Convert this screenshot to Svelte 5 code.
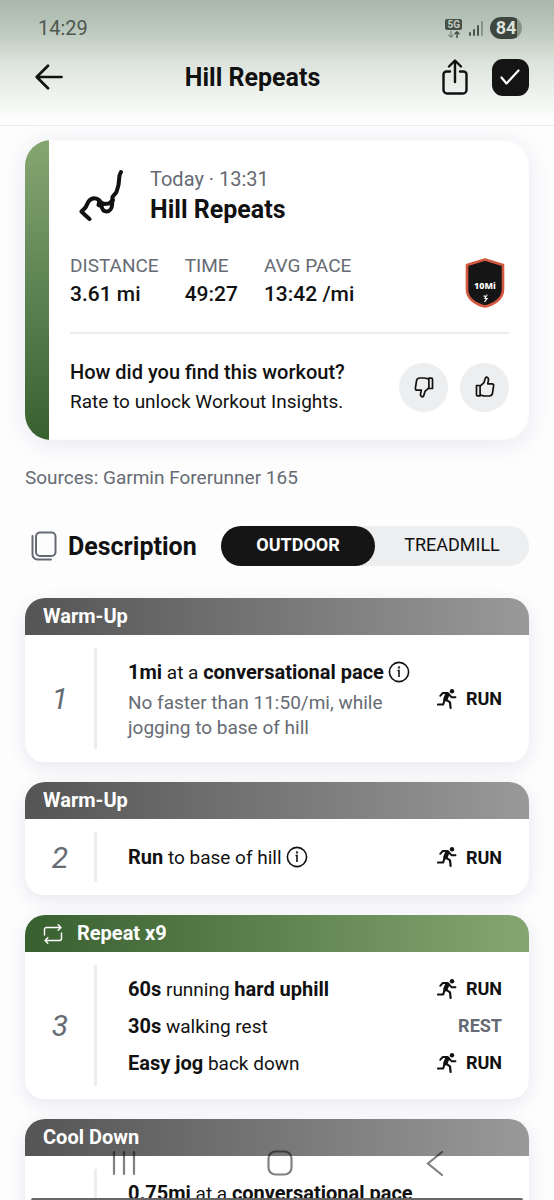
<script>
  let surface = $state("outdoor");

  const surfaces = [
    { id: "outdoor", label: "OUTDOOR" },
    { id: "treadmill", label: "TREADMILL" }
  ];

  const stats = [
    { label: "DISTANCE", value: "3.61 mi" },
    { label: "TIME", value: "49:27" },
    { label: "AVG PACE", value: "13:42 /mi" }
  ];

  const steps = [
    {
      title: "Warm-Up",
      rows: [
        {
          parts: [["1mi", true], [" at a "], ["conversational pace", true]],
          info: true,
          note: "No faster than 11:50/mi, while jogging to base of hill",
          kind: "RUN"
        }
      ]
    },
    {
      title: "Warm-Up",
      rows: [{ parts: [["Run", true], [" to base of hill"]], info: true, kind: "RUN" }]
    },
    {
      title: "Repeat x9",
      repeat: true,
      rows: [
        { parts: [["60s", true], [" running "], ["hard uphill", true]], kind: "RUN" },
        { parts: [["30s", true], [" walking rest"]], kind: "REST" },
        { parts: [["Easy jog", true], [" back down"]], kind: "RUN" }
      ]
    },
    {
      title: "Cool Down",
      rows: [
        {
          parts: [["0.75mi", true], [" at a "], ["conversational pace", true]],
          note: "No faster than 11:50/mi, while jogging back home",
          kind: "RUN"
        }
      ]
    }
  ];
</script>

{#snippet thumb()}
  <path d="M1.5 9.5h3.6v10.3H2.6a1.1 1.1 0 0 1-1.1-1.1z" />
  <path d="M5.1 10.2 9 6.600 10.400 2c.2-.8 1-1 1.700-.7 1.300.6 1.600 2 1.300 3.300L12.700 7.800H17c1.100 0 1.800.9 1.600 2l-1.100 7.400c-.3 1.900-1.500 2.800-3.300 2.800H9.500c-1.700 0-2.700-.9-4.400-1.100" />
{/snippet}

<div class="screen">
  <header class="top">
    <div class="status">
      <time>14:29</time>
      <div class="status-icons">
        <span class="network">
          <b>5G</b>
          <svg width="12" height="7" viewBox="0 0 12 7" fill="none" stroke-width="1.4">
            <path d="M3 0v6M.5 3.700 3 6.200l2.500-2.500" stroke="#7f8a80" />
            <path d="M9 7V1M6.500 3.300 9 .8l2.500 2.500" stroke="#3f4a41" />
          </svg>
        </span>
        <svg width="14" height="15" viewBox="0 0 14 15" fill="#4a544b">
          <rect x="0" y="11" width="2" height="4" rx="1" />
          <rect x="4" y="8" width="2" height="7" rx="1" />
          <rect x="8" y="4" width="2" height="11" rx="1" />
          <rect x="12" y="0" width="2" height="15" rx="1" opacity=".45" />
        </svg>
        <span class="battery">84</span>
      </div>
    </div>
    <div class="toolbar">
      <button class="icon-button" type="button" aria-label="Back">
        <svg width="28" height="26" viewBox="0 0 28 26" fill="none" stroke="#111" stroke-width="2.700" stroke-linecap="round" stroke-linejoin="round">
          <path d="M26.500 13H2M13 1.800 1.700 13 13 24.200" />
        </svg>
      </button>
      <h1>Hill Repeats</h1>
      <div class="actions">
        <button class="icon-button" type="button" aria-label="Share">
          <svg width="26" height="36" viewBox="0 0 26 36" fill="none" stroke="#111" stroke-width="2.400" stroke-linecap="round" stroke-linejoin="round">
            <path d="M13 23V1.800M7 7.500l6-6 6 6" />
            <path d="M8 12.500H4.500a3 3 0 0 0-3 3V31a3.500 3.500 0 0 0 3.500 3.500h16a3.500 3.500 0 0 0 3.500-3.500V15.500a3 3 0 0 0-3-3H18" />
          </svg>
        </button>
        <button class="icon-button done" type="button" aria-label="Completed">
          <svg width="20" height="16" viewBox="0 0 20 16" fill="none" stroke="#fff" stroke-width="2.200" stroke-linecap="round" stroke-linejoin="round">
            <path d="M1.500 8.500 6.500 14.500 18.500 1.500" />
          </svg>
        </button>
      </div>
    </div>
  </header>

  <main>
    <section class="summary">
      <div class="summary-body">
        <div class="summary-head">
          <svg width="46" height="52" viewBox="0 0 46 52" fill="none" stroke="#111" stroke-width="4" stroke-linecap="round" stroke-linejoin="round">
            <path d="M43 3 41.500 6.500 40.500 16 38.500 23 34.500 28 34.200 35C34 39.500 31.500 42.500 28.500 42.500 25.500 42.500 24 40 23.500 37L20.500 36 21.500 31.500C18.500 28.500 14 28 10.500 32.500L7.500 38.500 3.500 42.500 7 46 11.500 50" />
            <path d="M21.500 32.500 26 35 31 34.500 35 31" />
          </svg>
          <div>
            <p class="muted">Today · 13:31</p>
            <h2>Hill Repeats</h2>
          </div>
        </div>

        <div class="stats">
          <dl>
            {#each stats as stat (stat.label)}
              <div>
                <dt>{stat.label}</dt>
                <dd>{stat.value}</dd>
              </div>
            {/each}
          </dl>
          <svg class="badge" width="40" height="50" viewBox="0 0 40 50">
            <path d="M20 1.500 38 7v24.500C38 40 30.500 46 20 48.500 9.500 46 2 40 2 31.500V7z" fill="#151515" stroke="#d2583f" stroke-width="2.600" stroke-linejoin="round" />
            <text x="20" y="31" text-anchor="middle">10Mi</text>
            <path d="M18.500 38.200h2.700l-1.200 2.300h2l-2.500 3.500M21.800 37.200l.6-.4" fill="none" stroke="#fff" stroke-width="1.200" />
          </svg>
        </div>

        <div class="feedback">
          <div>
            <p class="question">How did you find this workout?</p>
            <p>Rate to unlock Workout Insights.</p>
          </div>
          <div class="votes">
            <button type="button" aria-label="Thumbs down">
              <svg class="down" width="20" height="22" viewBox="0 0 20 22">{@render thumb()}</svg>
            </button>
            <button type="button" aria-label="Thumbs up">
              <svg width="20" height="22" viewBox="0 0 20 22">{@render thumb()}</svg>
            </button>
          </div>
        </div>
      </div>
    </section>

    <p class="sources">Sources: Garmin Forerunner 165</p>

    <div class="description">
      <svg width="26" height="30" viewBox="0 0 26 30" fill="none" stroke="#656a72" stroke-width="2" stroke-linecap="round">
        <rect x="5" y="1.500" width="19.500" height="23.500" rx="4" />
        <path d="M1.500 5v18.500a5 5 0 0 0 5 5H20" />
      </svg>
      <h2>Description</h2>
      <div class="segments">
        {#each surfaces as item (item.id)}
          <button
            class="segment"
            class:selected={surface === item.id}
            type="button"
            aria-pressed={surface === item.id}
            onclick={() => (surface = item.id)}
          >
            {item.label}
          </button>
        {/each}
      </div>
    </div>

    <ol class="steps">
      {#each steps as step, i}
        <li>
          <h3 class:repeat={step.repeat}>
            {#if step.repeat}
              <svg width="20" height="20" viewBox="0 0 20 20" fill="none" stroke="#fff" stroke-width="1.400" stroke-linecap="round" stroke-linejoin="round">
                <path d="M1.500 11V5.500a2 2 0 0 1 2-2H18M15.200.8 18 3.500l-2.800 2.700" />
                <path d="M18.500 9v5.500a2 2 0 0 1-2 2H2M4.800 13.800 2 16.500l2.800 2.700" />
              </svg>
            {/if}
            {step.title}
          </h3>
          <div class="step-body">
            <span class="number">{i + 1}</span>
            <div class="rows">
              {#each step.rows as row}
                <div class="row">
                  <div class="text">
                    <div class="line">
                      <p>{#each row.parts as [text, strong]}{#if strong}<strong>{text}</strong>{:else}{text}{/if}{/each}</p>
                      {#if row.info}
                        <button class="info" type="button" aria-label="More info">
                          <svg width="22" height="22" viewBox="0 0 22 22" fill="none" stroke="#111" stroke-width="1.600">
                            <circle cx="11" cy="11" r="9.600" />
                            <path d="M9.500 9.500H11V16" />
                            <circle cx="11" cy="6.400" r=".4" />
                          </svg>
                        </button>
                      {/if}
                    </div>
                    {#if row.note}
                      <p class="note">{row.note}</p>
                    {/if}
                  </div>
                  <span class="kind" class:rest={row.kind === "REST"}>
                    {#if row.kind === "RUN"}
                      <svg width="20" height="20" viewBox="0 0 20 20" fill="none" stroke="#111" stroke-linecap="round" stroke-linejoin="round">
                        <circle cx="15" cy="2.300" r="2.200" fill="#111" stroke="none" />
                        <path d="M3.200 6.800 5.800 4H10" stroke-width="1.900" />
                        <path d="M10.500 5.200 8.400 10.200" stroke-width="4.400" />
                        <path d="M12 5.500 14.500 8.200H18.500" stroke-width="1.900" />
                        <path d="M9 10.700 13 13.300 13.600 19" stroke-width="2.200" />
                        <path d="M7.500 11 6.200 15.500H1" stroke-width="2.100" />
                      </svg>
                    {/if}
                    {row.kind}
                  </span>
                </div>
              {/each}
            </div>
          </div>
        </li>
      {/each}
    </ol>
  </main>

  <nav class="system-nav" aria-label="System">
    <button type="button" aria-label="Recent apps">
      <svg width="26" height="26" viewBox="0 0 26 26" fill="none" stroke="#808080" stroke-width="2.200" stroke-linecap="round">
        <path d="M3 2v22M13 2v22M23 2v22" />
      </svg>
    </button>
    <button type="button" aria-label="Home">
      <svg width="26" height="26" viewBox="0 0 26 26" fill="none" stroke="#808080" stroke-width="2.200">
        <rect x="1.500" y="1.500" width="23" height="23" rx="7" />
      </svg>
    </button>
    <button type="button" aria-label="Back">
      <svg width="26" height="26" viewBox="0 0 26 26" fill="none" stroke="#808080" stroke-width="2.200" stroke-linecap="round">
        <path d="M20 2 6 13.500 20 25" />
      </svg>
    </button>
  </nav>
  <div class="sheet-edge"></div>
</div>

<style>
  :global(body) {
    margin: 0;
    background: #fdfdfe;
  }

  .screen {
    height: 100vh;
    display: flex;
    flex-direction: column;
    overflow: hidden;
    color: #111;
    font-family: Roboto, "Liberation Sans", sans-serif;
    font-size: 19px;
  }

  h1,
  h2,
  h3,
  p,
  dl,
  dd,
  ol {
    margin: 0;
    padding: 0;
  }

  h1,
  h2 {
    font-size: 25px;
    font-weight: 700;
  }

  button {
    border: 0;
    padding: 0;
    background: none;
    color: inherit;
    font: inherit;
    cursor: pointer;
  }

  svg {
    display: block;
    flex-shrink: 0;
  }

  .top {
    flex-shrink: 0;
    padding: 0 25px 27px;
    border-bottom: 1px solid #e9eaeb;
    background: linear-gradient(#a8b7aa, #c0cbc1 28%, #dce3dc 50%, #f2f5f2 80%, #fff);
  }

  .status {
    height: 56px;
    display: flex;
    align-items: center;
    justify-content: space-between;
    padding: 0 7px 0 13px;
    color: #4d584f;
    font-size: 20px;
  }

  .status-icons {
    display: flex;
    align-items: center;
    gap: 7px;
  }

  .network {
    display: flex;
    flex-direction: column;
    align-items: center;
    gap: 1px;
  }

  .network b {
    padding: 0 2px;
    border-radius: 2px;
    background: #455047;
    color: #c3cdc4;
    font-size: 10px;
    line-height: 11px;
  }

  .battery {
    width: 32px;
    border-radius: 11px;
    background: linear-gradient(90deg, #3d453e 84%, #869187 84%);
    color: #dbe2dc;
    font-size: 18px;
    font-weight: 700;
    line-height: 22px;
    text-align: center;
  }

  .toolbar {
    height: 42px;
    display: flex;
    align-items: center;
    justify-content: space-between;
    padding-left: 10px;
  }

  .icon-button {
    display: grid;
    place-items: center;
  }

  .actions {
    display: flex;
    align-items: center;
    gap: 24px;
  }

  .done {
    width: 37px;
    height: 37px;
    border-radius: 11px;
    background: #141414;
  }

  main {
    flex: 1;
    min-height: 0;
    padding: 14px 25px 0;
    overflow-y: auto;
    scrollbar-width: none;
  }

  .summary {
    padding: 2px 2px 2px 24px;
    border-radius: 26px;
    background: linear-gradient(#86a671, #5d8352 50%, #38602f) left / 24px 100% no-repeat;
    box-shadow: 0 4px 24px rgba(40, 50, 90, 0.1);
  }

  .summary-body {
    padding: 22px 18px 21px 21px;
    border-radius: 0 24px 24px 0;
    background: #fff;
  }

  .summary-head {
    display: flex;
    align-items: center;
    gap: 26px;
    padding: 0 8px;
  }

  .summary-head h2 {
    line-height: 32px;
  }

  .muted,
  dt,
  .sources,
  .note {
    color: #666b73;
  }

  .summary-head .muted {
    font-size: 20px;
    line-height: 30px;
  }

  .stats {
    display: flex;
    align-items: end;
    justify-content: space-between;
    padding: 26px 4px 24px 0;
    border-bottom: 2px solid #ecedef;
  }

  dl {
    display: flex;
    gap: 26px;
  }

  dt {
    line-height: 28px;
  }

  dd {
    font-size: 21px;
    font-weight: 500;
    line-height: 28px;
  }

  .badge text {
    fill: #fff;
    font-family: "Noto Sans", sans-serif;
    font-size: 9px;
    font-weight: 800;
  }

  .feedback {
    display: flex;
    align-items: center;
    justify-content: space-between;
    padding-top: 23px;
  }

  .feedback p {
    line-height: 30px;
  }

  .feedback .question {
    font-size: 20px;
    font-weight: 500;
  }

  .votes {
    display: flex;
    gap: 12px;
  }

  .votes button {
    width: 49px;
    height: 49px;
    display: grid;
    place-items: center;
    border-radius: 50%;
    background: #edeef0;
  }

  .votes svg {
    fill: none;
    stroke: #111;
    stroke-width: 1.7;
    stroke-linejoin: round;
  }

  .down {
    transform: rotate(180deg);
  }

  .sources {
    padding: 24px 0 34px;
    line-height: 28px;
  }

  .description {
    display: flex;
    align-items: center;
    padding-left: 6px;
  }

  .description h2 {
    flex: 1;
    padding-left: 11px;
  }

  .segments {
    flex: 0 1 308px;
    display: grid;
    grid-template-columns: 1fr 1fr;
    border-radius: 20px;
    background: #edeef0;
  }

  .segment {
    height: 40px;
    padding-bottom: 3px;
    border-radius: 20px;
    font-size: 18px;
  }

  .segment.selected {
    background: #151515;
    color: #fff;
    font-weight: 700;
  }

  .steps {
    display: grid;
    grid-template-columns: minmax(0, 1fr);
    gap: 20px;
    padding: 32px 0 80px;
    list-style: none;
  }

  .steps li {
    border-radius: 20px;
    box-shadow: 0 5px 18px rgba(40, 50, 90, 0.1);
  }

  h3 {
    display: flex;
    align-items: center;
    gap: 14px;
    padding: 0 18px;
    border-radius: 20px 20px 0 0;
    background: linear-gradient(90deg, #555, #999);
    color: #fff;
    font-size: 20px;
    font-weight: 700;
    line-height: 37px;
  }

  h3.repeat {
    background: linear-gradient(90deg, #38602f, #86a671);
  }

  .step-body {
    display: flex;
    margin: 0 1px;
    padding: 13px 26px 13px 0;
    border-radius: 0 0 18px 18px;
    background: #fff;
  }

  .number {
    flex: 0 0 68px;
    display: grid;
    place-items: center;
    color: #666b73;
    font-size: 30px;
    font-style: italic;
  }

  .rows {
    flex: 1;
    min-width: 0;
    min-height: 40px;
    display: grid;
    align-content: center;
    padding: 5px 0 5px 31px;
    border-left: 3px solid #ecedef;
  }

  .row {
    display: flex;
    align-items: center;
    justify-content: space-between;
    gap: 24px;
  }

  .line {
    display: flex;
    align-items: center;
    gap: 4px;
    min-height: 37px;
  }

  .line strong {
    font-size: 20px;
  }

  .note {
    padding-bottom: 4px;
    line-height: 25px;
  }

  .kind {
    display: flex;
    align-items: center;
    gap: 9px;
    font-size: 18px;
    font-weight: 700;
  }

  .kind.rest {
    color: #666b73;
  }

  .system-nav {
    position: fixed;
    inset: auto 0 0;
    display: flex;
    justify-content: space-between;
    padding: 0 106px 24px 111px;
    mix-blend-mode: multiply;
  }

  .sheet-edge {
    position: fixed;
    inset: auto 31px 0;
    height: 2px;
    border-radius: 2px 2px 0 0;
    background: #666;
  }
</style>
